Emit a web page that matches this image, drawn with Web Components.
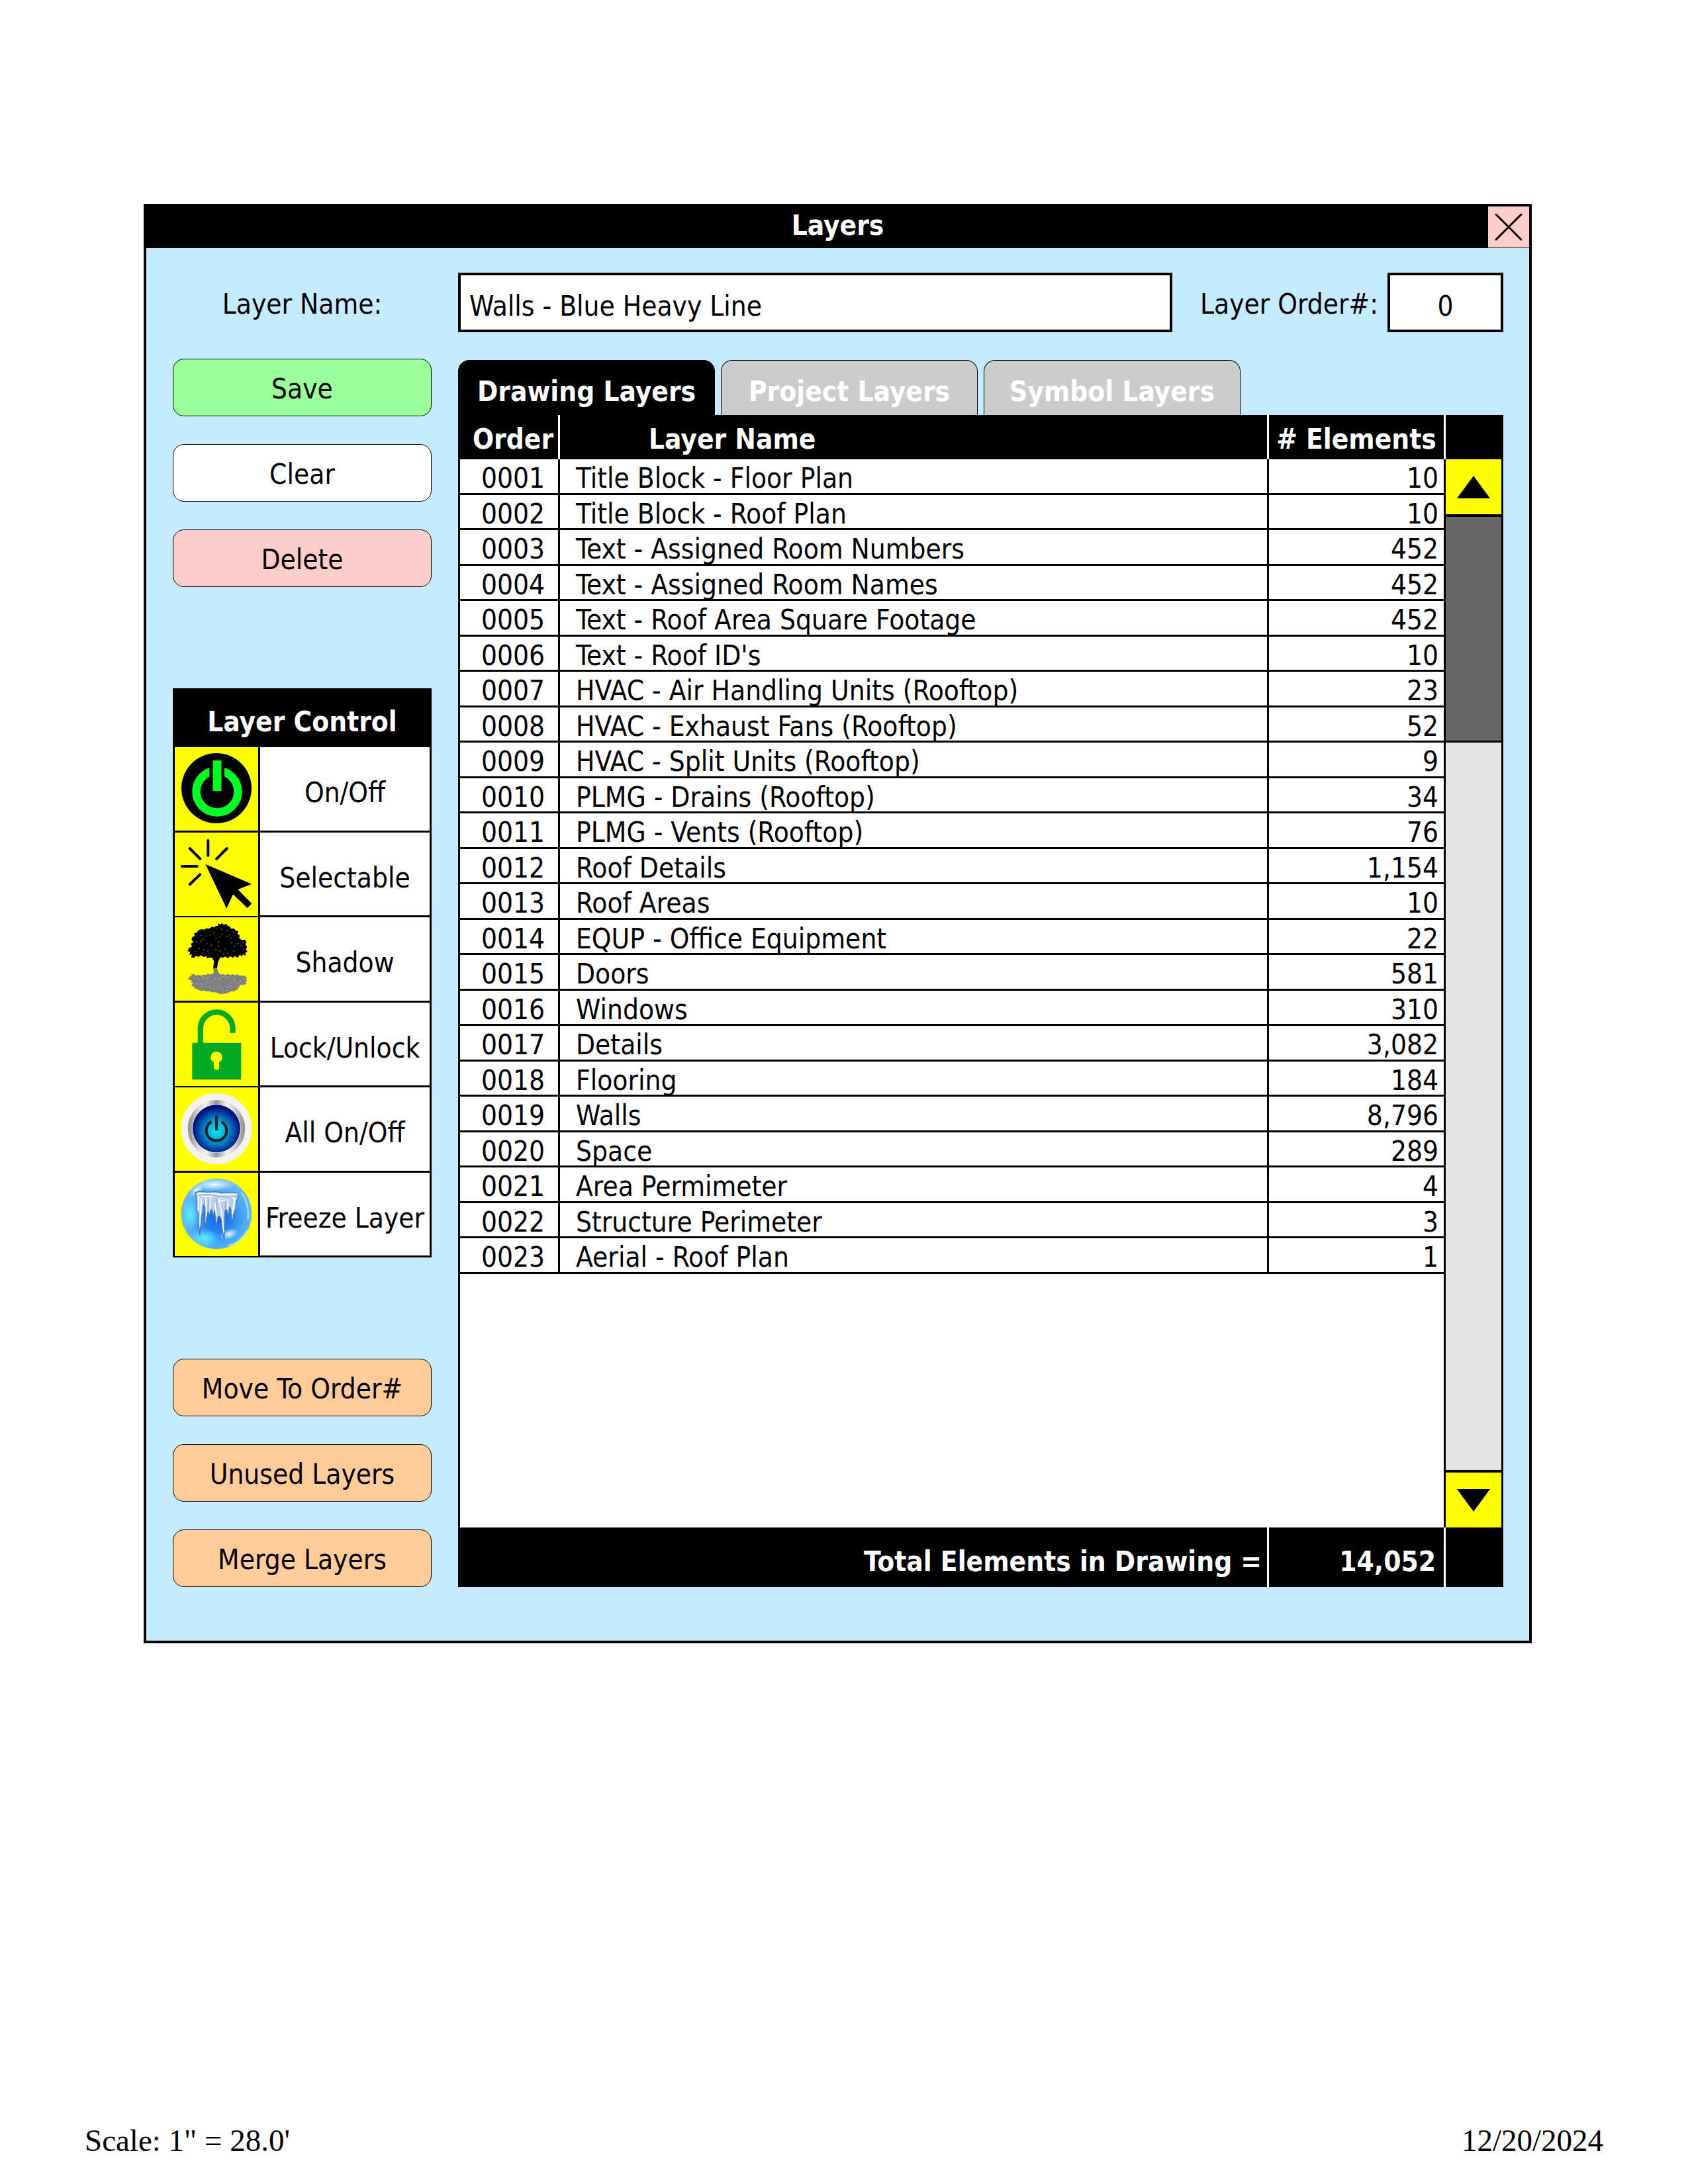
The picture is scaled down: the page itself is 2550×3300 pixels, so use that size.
<!DOCTYPE html>
<html lang="en">
<head>
<meta charset="utf-8">
<title>Layers</title>
<style>
  body {
    margin: 0;
    background: #fff;
    color: #000;
    font-family: "DejaVu Sans Condensed", "DejaVu Sans", sans-serif;
    font-size: 42px;
    line-height: 48px;
  }
</style>
</head>
<body>
<layers-page></layers-page>

<script>
const RESET = `
  :host, *, *::before, *::after { box-sizing: border-box; }
  button, input { font: inherit; color: inherit; margin: 0; padding: 0; border: 0; border-radius: 0; background: none; }
  button { cursor: pointer; }
  svg { display: block; }
`;

class BaseElement extends HTMLElement {
  connectedCallback() {
    if (this.shadowRoot) return;
    const root = this.attachShadow({ mode: "open" });
    root.innerHTML = `<style>${RESET}${this.styles()}</style>${this.markup()}`;
  }
  styles() { return ""; }
  markup() { return ""; }
}

/* Rounded push button; the tone attribute picks its fill */
customElements.define("action-button", class extends BaseElement {
  styles() {
    return `
      :host { display: block; --fill: #fff; }
      :host([tone="save"]) { --fill: #99ff99; }
      :host([tone="delete"]) { --fill: #ffcccc; }
      :host([tone="move"]) { --fill: #ffcc99; }
      button { display: block; width: 100%; height: 87px; padding-top: 5px; border: 1px solid #000; border-radius: 17px; background: var(--fill); }
    `;
  }
  markup() { return `<button type="button"><slot></slot></button>`; }
});

/* Captioned text box */
customElements.define("layer-field", class extends BaseElement {
  styles() {
    return `
      :host { display: flex; align-items: center; }
      label { flex: none; width: 431px; padding: 6px 40px 0 0; text-align: center; white-space: nowrap; }
      input { flex: 1; min-width: 0; height: 90px; border: 4px solid #000; background: #fff; padding: 10px 13px 0; }
      :host([compact]) label { width: 325px; padding-right: 14px; text-align: right; }
      :host([compact]) input { flex: none; width: 175px; text-align: center; }
    `;
  }
  markup() {
    return `<label for="box">${this.getAttribute("label")}</label>
      <input id="box" type="text" value="${this.getAttribute("value")}">`;
  }
});

/* Row of folder tabs over the list */
customElements.define("layer-tabs", class extends BaseElement {
  styles() {
    return `
      :host { display: flex; gap: 9px; }
      button { width: 388px; height: 83px; padding-top: 11px; border: 1px solid #000; border-bottom: 0; border-radius: 17px 17px 0 0; background: #ccc; color: #fff; font-weight: 700; white-space: nowrap; }
      button[aria-selected="true"] { background: #000; }
    `;
  }
  markup() {
    return ["Drawing Layers", "Project Layers", "Symbol Layers"].map((t, i) =>
      `<button type="button" role="tab" aria-selected="${i === 0}">${t}</button>`).join("");
  }
});

const LAYERS = [
  ["Title Block - Floor Plan", "10"],
  ["Title Block - Roof Plan", "10"],
  ["Text - Assigned Room Numbers", "452"],
  ["Text - Assigned Room Names", "452"],
  ["Text - Roof Area Square Footage", "452"],
  ["Text - Roof ID's", "10"],
  ["HVAC - Air Handling Units (Rooftop)", "23"],
  ["HVAC - Exhaust Fans (Rooftop)", "52"],
  ["HVAC - Split Units (Rooftop)", "9"],
  ["PLMG - Drains (Rooftop)", "34"],
  ["PLMG - Vents (Rooftop)", "76"],
  ["Roof Details", "1,154"],
  ["Roof Areas", "10"],
  ["EQUP - Office Equipment", "22"],
  ["Doors", "581"],
  ["Windows", "310"],
  ["Details", "3,082"],
  ["Flooring", "184"],
  ["Walls", "8,796"],
  ["Space", "289"],
  ["Area Permimeter", "4"],
  ["Structure Perimeter", "3"],
  ["Aerial - Roof Plan", "1"]
];

/* Table of layers with its totals row */
customElements.define("layer-table", class extends BaseElement {
  styles() {
    return `
      :host { display: block; }
      table { width: 100%; table-layout: fixed; border-collapse: separate; border-spacing: 0; background: #fff; }
      .c-order { width: 154px; }
      .c-count { width: 267px; }
      th, td { padding: 0; white-space: nowrap; text-align: left; font-weight: 400; vertical-align: top; }
      thead th, tfoot th, tfoot td { background: #000; color: #fff; font-weight: 700; border-right: 3px solid #fff; }
      thead th { height: 67px; padding-top: 13px; }
      thead th:first-child { padding-left: 22px; }
      thead th:nth-child(2) { padding-left: 134px; }
      thead th:nth-child(3) { text-align: center; }
      tfoot th, tfoot td { height: 90px; padding-top: 28px; text-align: right; }
      tfoot th { padding-right: 8px; }
      tfoot td { padding-right: 12px; }
      tbody td { height: 53px; padding-top: 7px; line-height: 43px; border-right: 3px solid #000; border-bottom: 3px solid #000; }
      tbody tr:nth-child(odd) td { height: 54px; }
      tbody td:first-child { border-left: 3px solid #000; padding-left: 12px; text-align: center; }
      tbody td:nth-child(2) { padding-left: 24px; }
      tbody td:nth-child(3) { text-align: right; padding-right: 8px; }
      tbody tr.rest td { height: 383px; border-bottom: 0; }
    `;
  }
  markup() {
    const rows = LAYERS.map(([name, count], i) =>
      `<tr><td>${String(i + 1).padStart(4, "0")}</td><td>${name}</td><td>${count}</td></tr>`).join("");
    return `<table>
      <colgroup><col class="c-order"><col><col class="c-count"></colgroup>
      <thead><tr><th>Order</th><th>Layer Name</th><th># Elements</th></tr></thead>
      <tbody>${rows}<tr class="rest"><td colspan="3"></td></tr></tbody>
      <tfoot><tr><th colspan="2">Total Elements in Drawing =</th><td>14,052</td></tr></tfoot>
    </table>`;
  }
});

/* Vertical scroll bar beside the table */
customElements.define("list-scrollbar", class extends BaseElement {
  styles() {
    return `
      :host { display: flex; flex-direction: column; border: solid #000; border-width: 67px 3px 90px 0; background: #e4e4e4; }
      button { display: grid; place-items: center; background: #ff0; }
      .up { height: 87px; border-bottom: 4px solid #000; }
      .thumb { height: 341px; background: #666; border-bottom: 3px solid #000; }
      .down { height: 87px; border-top: 4px solid #000; margin-top: auto; }
    `;
  }
  markup() {
    return `
      <button class="up" type="button" aria-label="Scroll up"><svg width="50" height="34" viewBox="0 0 50 34"><path d="M25 0 50 34H0z"/></svg></button>
      <div class="thumb"></div>
      <button class="down" type="button" aria-label="Scroll down"><svg width="50" height="34" viewBox="0 0 50 34"><path d="M0 0H50L25 34z"/></svg></button>`;
  }
});

const CANOPY = "M62 156 70 142 82 138 76 124 88 118 80 104 84 94 94 88 92 76 104 74 112 62 126 58 138 60 146 54 160 56 172 46 184 50 190 42 200 44 200 32 210 36 218 30 226 38 238 34 244 44 254 46 258 56 272 54 280 64 292 68 288 80 298 86 296 98 306 106 322 106 330 116 324 126 332 138 326 150 334 160 324 164 326 178 314 172 308 180 298 174 290 188 278 180 266 188 256 180 244 190 234 182 222 188 212 184 200 206 196 234 H178 L182 204 174 188 160 186 150 190 146 180 134 184 122 176 112 184 100 178 92 188 78 186 82 172 70 174 74 162z";
const SPECKS = "M120 90l8-6M132 100l6 5M118 114l10-4M142 92l5-6M160 82l6 3M178 74l6-4M188 100l6-3M205 88l5 5M222 78l-6 5M236 92l7-3M250 82l5 6M262 96l-6 3M202 112l4 8M204 132l-3 7M186 150l8 3M206 158l8-4M228 146l6 6M258 122l6-4M272 136l8-3M288 120l6 5M300 134l7-4M312 150l5 3M268 160l6-6M240 168l6-5M150 158l7-3M132 150l6 4M108 148l8-3M94 162l7-4M126 168l6-3M166 132l6-3M148 122l5 4M100 116l6-3M214 60l7-2M238 62l6 3M192 58l5-3M154 170l5-4M222 172l6-4M310 120l4-3";

const ICONS = {
  power: `
    <defs><linearGradient id="rim" x1="0" y1="1" x2="1" y2="0"><stop offset="0" stop-color="#556"/><stop offset=".15" stop-color="#000"/><stop offset=".85" stop-color="#000"/><stop offset="1" stop-color="#556"/></linearGradient></defs>
    <circle cx="63" cy="62" r="53" fill="url(#rim)"/>
    <circle cx="64" cy="67" r="31.5" fill="none" stroke="#00ff22" stroke-width="12.5"/>
    <path d="M52.5 28h22.500v34h-22.500z"/>
    <rect x="57.500" y="20" width="13" height="46" rx="1" fill="#00ff22"/>`,
  select: `
    <path d="M50.3 12v22.700M22.700 24l15.600 15.700M78.700 24 63.300 39.700M10.700 51h23M38.300 63.300l-15.600 15" fill="none" stroke="#000" stroke-width="4" stroke-linecap="round"/>
    <path d="M46.300 47.700 116.300 77.700 95.300 86 116.300 107.300 109.700 114 88 93.300 78.300 114.700z"/>`,
  shadow: `
    <g transform="scale(.3333) translate(-4 -4)">
      <g><path d="${CANOPY}"/><path d="${SPECKS}" stroke="#c8c8e0" stroke-width="2" fill="none"/></g>
      <g transform="translate(0 371) scale(1 -.58)"><path d="${CANOPY}" fill="#808080"/><path d="${SPECKS}" stroke="#c9c9c0" stroke-width="3" fill="none"/></g>
      <path d="M188 214 200 190 214 178" stroke="#000" stroke-width="7" fill="none"/>
    </g>`,
  lock: `
    <g transform="scale(.3333) translate(-39 -220)">
      <path d="M155.500 410V336a73 73 0 0 1 146 0v21" fill="none" stroke="#0a2" stroke-width="25"/>
      <path d="M118 402h222v167H118z" fill="#0a2"/>
      <path d="M228 442a26 26 0 0 1 12 49v26q0 8-12 8t-12-8v-26a26 26 0 0 1 12-49z" fill="#ff0"/>
    </g>`,
  all: `
    <defs>
      <linearGradient id="metal"><stop offset="0" stop-color="#9a9696"/><stop offset=".15" stop-color="#d8d4d4"/><stop offset=".3" stop-color="#f4f4f4"/><stop offset=".5" stop-color="#9a9494"/><stop offset=".7" stop-color="#f4f4f4"/><stop offset=".85" stop-color="#d0cccc"/><stop offset="1" stop-color="#9a9696"/></linearGradient>
      <radialGradient id="glow" cy=".55"><stop offset="0" stop-color="#10e4e8"/><stop offset=".35" stop-color="#08b4d4"/><stop offset=".7" stop-color="#0458b4"/><stop offset="1" stop-color="#001078"/></radialGradient>
    </defs>
    <g transform="scale(.3333) translate(-39 -607)">
      <circle cx="228" cy="794" r="161" fill="#f2f2f4"/>
      <circle cx="228" cy="794" r="120" fill="none" stroke="url(#metal)" stroke-width="20"/>
      <circle cx="228" cy="794" r="110" fill="#e4e4ee"/>
      <circle cx="228" cy="794" r="108" fill="url(#glow)"/>
      <path d="M205 763a46 46 0 1 0 46 0M228 735v68" fill="none" stroke="#122028" stroke-width="12"/>
    </g>`,
  freeze: `
    <defs>
      <radialGradient id="ball" cx=".52" cy=".56" r=".52"><stop offset="0" stop-color="#1466f0"/><stop offset=".35" stop-color="#2080f4"/><stop offset=".7" stop-color="#48a8fc"/><stop offset="1" stop-color="#68bcfa"/></radialGradient>
      <radialGradient id="cyan"><stop offset="0" stop-color="#60ffff" stop-opacity=".8"/><stop offset="1" stop-color="#60ffff" stop-opacity="0"/></radialGradient>
      <radialGradient id="shine"><stop offset="0" stop-color="#fff" stop-opacity=".9"/><stop offset="1" stop-color="#fff" stop-opacity="0"/></radialGradient>
    </defs>
    <g transform="scale(.3333) translate(-4 -4)">
      <circle cx="193" cy="190" r="160" fill="url(#ball)"/>
      <ellipse cx="76" cy="195" rx="42" ry="72" fill="url(#cyan)"/>
      <ellipse cx="140" cy="300" rx="70" ry="42" fill="url(#cyan)"/>
      <ellipse cx="185" cy="58" rx="95" ry="28" fill="url(#shine)"/>
      <ellipse cx="104" cy="84" rx="36" ry="22" transform="rotate(-42 104 84)" fill="url(#shine)"/>
      <ellipse cx="250" cy="282" rx="46" ry="24" transform="rotate(-20 250 282)" fill="url(#shine)"/>
      <path d="M246 334Q300 322 330 268M306 96Q342 140 336 214" fill="none" stroke="#c8f0ff" stroke-width="6" stroke-linecap="round" opacity=".75"/>
      <path d="M98 94 116 88 150 92 190 90 226 96 262 92 290 96 292 112 284 136 280 168 270 196 266 234 260 204 258 168 252 160 246 204 238 170 232 176 230 238 228 306 222 280 214 214 206 200 200 206 194 244 188 222 190 186 184 176 178 206 172 170 166 178 160 204 156 180 150 190 146 250 140 220 142 160 134 148 130 186 124 202 118 286 112 240 110 188 100 170 104 140z" fill="#b8d0e8" stroke="#4878a8" stroke-width="4" stroke-linejoin="round"/>
      <path d="M108 100 150 98 200 102 284 104M112 112 114 170M124 122 118 240M144 122 148 200M166 118 164 160M186 142 192 200M204 122 214 170 226 270M212 120 262 114 278 122M246 126 244 170M276 124 264 190M200 134 230 128M130 112 180 112" fill="none" stroke="#fff" stroke-width="5" stroke-linecap="round"/>
      <path d="M106 106Q150 96 196 110T286 108M156 130 154 176M196 124 192 160 204 170M236 138 232 166M136 124 138 150" fill="none" stroke="#7ca4cc" stroke-width="3"/>
    </g>`
};

/* One icon-and-caption row of the control panel */
customElements.define("control-row", class extends BaseElement {
  styles() {
    return `
      :host { display: block; height: 129px; }
      :host(:nth-of-type(even)) { height: 128px; }
      button { display: grid; grid-template-columns: 129px 1fr; width: 100%; height: 100%; border-bottom: 3px solid #000; background: #fff; }
      .icon { height: 100%; background: #ff0; border-right: 3px solid #000; }
      .text { align-self: center; padding-top: 12px; white-space: nowrap; }
    `;
  }
  markup() {
    return `<button type="button">
      <span class="icon"><svg width="126" height="126" viewBox="0 0 126 126" aria-hidden="true">${ICONS[this.getAttribute("icon")]}</svg></span>
      <span class="text"><slot></slot></span></button>`;
  }
});

customElements.define("layer-control", class extends BaseElement {
  styles() {
    return `
      :host { display: block; border: 3px solid #000; border-bottom: 0; }
      h2 { margin: 0; height: 86px; padding: 24px 0 0; background: #000; color: #fff; font-size: inherit; font-weight: 700; text-align: center; }
    `;
  }
  markup() {
    return `<h2>Layer Control</h2>
      <control-row icon="power">On/Off</control-row>
      <control-row icon="select">Selectable</control-row>
      <control-row icon="shadow">Shadow</control-row>
      <control-row icon="lock">Lock/Unlock</control-row>
      <control-row icon="all">All On/Off</control-row>
      <control-row icon="freeze">Freeze Layer</control-row>`;
  }
});

/* Framed dialog: title bar over slotted content */
customElements.define("dialog-window", class extends BaseElement {
  styles() {
    return `
      :host { display: block; border: 4px solid #000; background: #c5ebff; }
      header { display: grid; grid-template-columns: 62px 1fr 62px; align-items: center; height: 63px; background: #000; color: #fff; }
      h1 { grid-column: 2; margin: 0; padding-bottom: 6px; font-size: inherit; font-weight: 700; text-align: center; }
      button { display: grid; place-items: center; height: 62px; align-self: start; background: #ffcccc; }
      main { padding: 37px 39px 81px 40px; }
    `;
  }
  markup() {
    return `<header><h1>${this.getAttribute("heading")}</h1>
      <button type="button" aria-label="Close"><svg width="42" height="42" viewBox="0 0 42 42"><path d="M2 2 40 40M40 2 2 40" fill="none" stroke="#000" stroke-width="3" stroke-linecap="round"/></svg></button></header>
      <main><slot></slot></main>`;
  }
});

customElements.define("layers-page", class extends BaseElement {
  styles() {
    return `
      :host { display: flex; flex-direction: column; justify-content: space-between; min-height: 100vh; padding: 308px 0 42px; }
      dialog-window { margin: 0 236px 0 217px; }
      .fields { display: flex; padding-bottom: 40px; }
      .fields layer-field:first-child { flex: 1; }
      .body { display: grid; grid-template-columns: 391px 1fr; gap: 40px; }
      aside { display: flex; flex-direction: column; justify-content: space-between; }
      .stack { display: grid; gap: 42px; }
      section { padding-top: 2px; min-width: 0; }
      .list { display: grid; grid-template-columns: 1fr 87px; }
      footer { display: flex; justify-content: space-between; padding: 0 128px; font: 47px/48px "Liberation Serif", serif; }
    `;
  }
  markup() {
    return `
      <dialog-window heading="Layers">
        <div class="fields">
          <layer-field label="Layer Name:" value="Walls - Blue Heavy Line"></layer-field>
          <layer-field compact label="Layer Order#:" value="0"></layer-field>
        </div>
        <div class="body">
          <aside>
            <div class="stack">
              <action-button tone="save">Save</action-button>
              <action-button>Clear</action-button>
              <action-button tone="delete">Delete</action-button>
            </div>
            <layer-control></layer-control>
            <div class="stack">
              <action-button tone="move">Move To Order#</action-button>
              <action-button tone="move">Unused Layers</action-button>
              <action-button tone="move">Merge Layers</action-button>
            </div>
          </aside>
          <section>
            <layer-tabs role="tablist"></layer-tabs>
            <div class="list">
              <layer-table></layer-table>
              <list-scrollbar></list-scrollbar>
            </div>
          </section>
        </div>
      </dialog-window>
      <footer><span>Scale: 1" = 28.0'</span><time datetime="2024-12-20">12/20/2024</time></footer>`;
  }
});
</script>
</body>
</html>
